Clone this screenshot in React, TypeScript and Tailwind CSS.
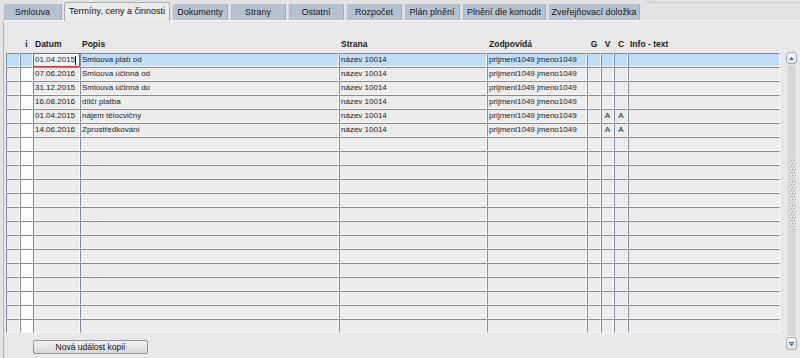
import React from "react";

const TABS = [
  { label: "Smlouva", w: "w-[59px]" },
  { label: "Termíny, ceny a činnosti", w: "w-[106px]", active: true },
  { label: "Dokumenty", w: "w-[56px]" },
  { label: "Strany", w: "w-[56px]" },
  { label: "Ostatní", w: "w-[56px]" },
  { label: "Rozpočet", w: "w-[56px]" },
  { label: "Plán plnění", w: "w-[56px]" },
  { label: "Plnění dle komodit", w: "w-[84px]" },
  { label: "Zveřejňovací doložka", w: "w-[92px]" },
];

const COLS = [
  { key: "a", w: "w-[14px]", head: "" },
  { key: "i", w: "w-[13px]", head: "i", center: true },
  { key: "datum", w: "w-[47px]", head: "Datum" },
  { key: "popis", w: "w-[259px]", head: "Popis" },
  { key: "strana", w: "w-[148px]", head: "Strana" },
  { key: "zodp", w: "w-[100px]", head: "Zodpovídá" },
  { key: "g", w: "w-[14px]", head: "G", center: true },
  { key: "v", w: "w-[13px]", head: "V", center: true },
  { key: "c", w: "w-[14px]", head: "C", center: true },
  { key: "info", w: "w-[152px]", head: "Info - text" },
];

type Row = { [k: string]: string };

const DATA: Row[] = [
  { datum: "01.04.2015", popis: "Smlouva platí od", strana: "název 10014", zodp: "prijmeni1049 jmeno1049" },
  { datum: "07.06.2016", popis: "Smlouva účinná od", strana: "název 10014", zodp: "prijmeni1049 jmeno1049" },
  { datum: "31.12.2015", popis: "Smlouva účinná do", strana: "název 10014", zodp: "prijmeni1049 jmeno1049" },
  { datum: "16.08.2016", popis: "dílčí platba", strana: "název 10014", zodp: "prijmeni1049 jmeno1049" },
  { datum: "01.04.2015", popis: "nájem tělocvičny", strana: "název 10014", zodp: "prijmeni1049 jmeno1049", v: "A", c: "A" },
  { datum: "14.06.2016", popis: "Zprostředkování", strana: "název 10014", zodp: "prijmeni1049 jmeno1049", v: "A", c: "A" },
];

const ROWS: Row[] = [...DATA, ...Array.from({ length: 14 }, () => ({}))];

function Cell({ col, row, ri }: { col: (typeof COLS)[number]; row: Row; ri: number }) {
  const selected = ri === 0;
  const focused = selected && col.key === "datum";
  let bg = selected ? "bg-[#bfdefa]" : "bg-[#ececec]";
  if (col.key === "i" && !selected) bg = "bg-white";
  if (focused) bg = "bg-[#f2f8fe]";
  const border = focused
    ? "border border-[#e23b3b]"
    : "border border-t-[#7b8ca6] border-l-[#7b8ca6] border-r-[#fbfbfb] border-b-[#f7f7f7]";
  return (
    <div
      className={`${col.w} h-[14px] shrink-0 ${bg} ${border} relative overflow-hidden whitespace-nowrap text-[8px] leading-[12px] text-[#1b1b1b] ${
        col.center ? "text-center" : "pl-[1px]"
      }`}
    >
      {row[col.key] ?? ""}
      {focused && <span className="absolute left-[41px] top-[2px] h-[9px] w-px bg-black" />}
    </div>
  );
}

function Scrollbar() {
  return (
    <div className="w-[11px] h-[298px] -mt-[1px] ml-[6px] flex flex-col">
      <div className="h-[12px] rounded-[3px] border border-[#a3adba] bg-gradient-to-b from-[#f6f7f9] to-[#dfe3e8] flex items-center justify-center">
        <svg width="5" height="3" viewBox="0 0 5 3">
          <path d="M2.5 0 L5 3 L0 3 Z" fill="#55667e" />
        </svg>
      </div>
      <div className="flex-1 mx-[1px] my-[1px] bg-[#d5d5d5] border-x border-[#e2e2e2] flex items-center justify-center">
        {/* grip */}
        <div className="grid grid-cols-2 gap-x-[2px] gap-y-[2px] -mt-[14px]">
          {Array.from({ length: 48 }, (_, i) => (
            <span
              key={i}
              className={`w-[1px] h-[1px] bg-white shadow-[1px_1px_0_#9aa3ae] ${i % 4 >= 2 ? "translate-x-[1px]" : ""}`}
            />
          ))}
        </div>
      </div>
      <div className="h-[13px] rounded-[3px] border border-[#a3adba] bg-gradient-to-b from-[#f6f7f9] to-[#dfe3e8] flex items-center justify-center">
        <svg width="5" height="4" viewBox="0 0 5 4">
          <rect x="0" y="0" width="5" height="1" fill="#55667e" />
          <path d="M0 1.5 L5 1.5 L2.5 4 Z" fill="#55667e" />
        </svg>
      </div>
    </div>
  );
}

export default function App() {
  return (
    <div
      className="w-[800px] h-[358px] overflow-hidden bg-[#e3e3e3] flex flex-col"
      style={{ fontFamily: '"Liberation Sans", Arial, sans-serif' }}
    >
      {/* tabs */}
      <div className="h-[20px] flex items-end gap-[2px] pl-[3px] shrink-0">
        {TABS.map((t) =>
          t.active ? (
            <div
              key={t.label}
              className={`${t.w} h-[19px] -mb-px z-10 rounded-t-[3px] border border-b-0 border-[#a7adb5] bg-[#ebebeb] text-[9px] leading-[17px] text-center text-[#111] whitespace-nowrap`}
            >
              {t.label}
            </div>
          ) : (
            <div
              key={t.label}
              className={`${t.w} h-[17px] rounded-t-[3px] border border-b-0 border-t-[#dde3ea] border-l-[#d3dae3] border-r-[#9eabba] bg-[#b5c1cf] text-[9px] leading-[16px] text-center text-[#1a1a1a] whitespace-nowrap`}
            >
              {t.label}
            </div>
          )
        )}
        <div className="flex-1 self-start h-[3px] ml-[5px] border-l border-b border-[#cbcbcb] rounded-bl-[4px]" />
      </div>

      {/* panel */}
      <div className="flex-1 ml-[3px] border-l border-t border-l-[#b5b5b5] border-t-[#f6f6f6] bg-[#e8e8e8] pl-[2px] pt-[16px]">
        <div className="flex h-[14px] text-[8.5px] font-bold leading-[14px] text-[#1b1b1b]">
          {COLS.map((c) => (
            <div key={c.key} className={`${c.w} shrink-0 whitespace-nowrap ${c.center ? "text-center" : "pl-[2px]"}`}>
              {c.head}
            </div>
          ))}
        </div>
        <div className="flex mt-[2px]">
          <div className="flex flex-col">
            {ROWS.map((r, ri) => (
              <div key={ri} className="flex">
                {COLS.map((c) => (
                  <Cell key={c.key} col={c} row={r} ri={ri} />
                ))}
              </div>
            ))}
            <button className="mt-[7px] ml-[27px] w-[115px] h-[14px] rounded-[2px] border border-[#8f959c] bg-gradient-to-b from-[#f3f3f3] to-[#d6d8db] text-[8.5px] leading-[12px] text-[#111]">
              Nová událost kopií
            </button>
          </div>
          <Scrollbar />
        </div>
      </div>
    </div>
  );
}
